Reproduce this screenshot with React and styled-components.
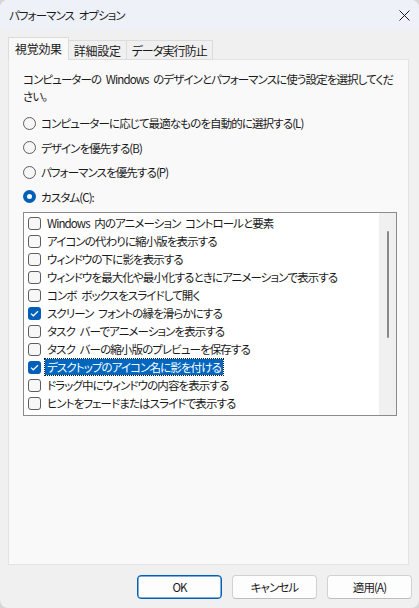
import styled, { createGlobalStyle, css } from "styled-components";

const GlobalStyle = createGlobalStyle`
  html, body {
    margin: 0;
    padding: 0;
    background: #d6d6d6;
  }
  body {
    font-family: "Noto Sans CJK JP", "Noto Sans", sans-serif;
    font-size: 12px;
    color: #1a1a1a;
  }
`;

// Yu Gothic UI kana are narrow; squeeze Noto a bit to get the same widths
const uiText = css`
  font-size: 11.5px;
  letter-spacing: -0.9px;
  word-spacing: 3px;
  font-feature-settings: "palt";
`;

const Window = styled.div`
  width: 419px;
  height: 608px;
  background-color: #f0f0f0;
  border-radius: 8px;
  overflow: hidden;
  display: flex;
  flex-direction: column;
  box-sizing: border-box;
`;

const TitleBar = styled.div`
  height: 30px;
  flex: none;
  background-color: #eef2f8;
  display: flex;
  align-items: center;
  justify-content: space-between;
  padding-left: 9px;
`;

const Title = styled.div`
  ${uiText}
  color: #1b1b1b;
`;

const CloseButton = styled.div`
  width: 30px;
  height: 30px;
  display: flex;
  align-items: center;
  justify-content: center;
`;

const Body = styled.div`
  flex: 1;
  display: flex;
  flex-direction: column;
  padding: 8px 10px 0 8px;
`;

const TabRow = styled.div`
  display: flex;
  align-items: flex-end;
  height: 22px;
  position: relative;
  z-index: 1;
  margin-bottom: -1px;
`;

const Tab = styled.div`
  box-sizing: border-box;
  height: ${(p) => (p.$active ? "23px" : "20px")};
  padding: 0 ${(p) => (p.$active ? "6px" : "5px")};
  margin-left: ${(p) => (p.$first ? "0" : "-1px")};
  background-color: ${(p) => (p.$active ? "#f9f9f9" : "#f0f0f0")};
  border: 1px solid #dcdcdc;
  border-bottom: ${(p) => (p.$active ? "none" : "1px solid #dcdcdc")};
  display: flex;
  align-items: center;
  padding-bottom: ${(p) => (p.$active ? "2px" : "0")};
  font-size: 12px;
  letter-spacing: ${(p) => (p.$tight ? "-0.9px" : "-0.3px")};
  font-feature-settings: "palt";
  white-space: nowrap;
`;

const Panel = styled.div`
  box-sizing: border-box;
  height: 506px;
  background-color: #f9f9f9;
  border: 1px solid #e3e3e3;
  padding: 11px 12px 0 14px;
  display: flex;
  flex-direction: column;
`;

const Description = styled.p`
  ${uiText}
  margin: 0;
  max-width: 372px;
  line-height: 17px;
`;

const RadioGroup = styled.div`
  display: flex;
  flex-direction: column;
  margin-top: 6px;
`;

const RadioRow = styled.label`
  ${uiText}
  height: 24.5px;
  display: flex;
  align-items: center;
  gap: 5px;
`;

const RadioCircle = styled.span`
  box-sizing: border-box;
  width: 13px;
  height: 13px;
  border-radius: 50%;
  border: ${(p) => (p.$checked ? "none" : "1px solid #5e5e5e")};
  background-color: ${(p) => (p.$checked ? "#005fb8" : "#f6f6f6")};
  display: flex;
  align-items: center;
  justify-content: center;
  flex: none;
  &::after {
    content: "";
    display: ${(p) => (p.$checked ? "block" : "none")};
    width: 5px;
    height: 5px;
    border-radius: 50%;
    background: #ffffff;
  }
`;

const ListBox = styled.div`
  box-sizing: border-box;
  margin-top: 3px;
  width: 374px;
  height: 204px;
  border: 1px solid #8b8b8b;
  background-color: #ffffff;
  display: flex;
`;

const ListItems = styled.div`
  flex: 1;
  padding: 1px 0 0 4px;
  display: flex;
  flex-direction: column;
`;

const Item = styled.div`
  height: 18px;
  display: flex;
  align-items: center;
  gap: 4px;
`;

const CheckBox = styled.span`
  box-sizing: border-box;
  width: 13px;
  height: 13px;
  border-radius: 3px;
  flex: none;
  border: ${(p) => (p.$checked ? "none" : "1px solid #5e5e5e")};
  background-color: ${(p) => (p.$checked ? "#005fb8" : "#f7f7f7")};
  display: flex;
  align-items: center;
  justify-content: center;
`;

const ItemLabel = styled.span`
  ${uiText}
  padding: 0 2px;
  line-height: 16px;
  white-space: nowrap;
  color: ${(p) => (p.$selected ? "#ffffff" : "#1a1a1a")};
  background-color: ${(p) => (p.$selected ? "#0067c0" : "transparent")};
  outline: ${(p) => (p.$selected ? "1px dotted #1a1a1a" : "none")};
`;

const ScrollTrack = styled.div`
  width: 17px;
  flex: none;
  background-color: #f0f0f0;
  display: flex;
  justify-content: center;
  padding-top: 18px;
  box-sizing: border-box;
`;

const ScrollThumb = styled.div`
  width: 2px;
  height: 107px;
  border-radius: 1px;
  background-color: #8a8a8a;
`;

const ButtonRow = styled.div`
  display: flex;
  justify-content: flex-end;
  gap: 10px;
  padding-top: 10px;
  margin-right: -3px;
`;

const Button = styled.button`
  ${uiText}
  box-sizing: border-box;
  width: 85px;
  height: 24px;
  border-radius: 4px;
  background-color: #fdfdfd;
  border: 1px solid ${(p) => (p.$primary ? "#005fb8" : "#d1d1d1")};
  border-bottom-color: ${(p) => (p.$primary ? "#005fb8" : "#bdbdbd")};
  box-shadow: ${(p) => (p.$primary ? "inset 0 0 0 0.5px #005fb8" : "none")};
  font-family: inherit;
  color: #1a1a1a;
  padding: 0;
`;

const Check = () => (
  <svg width="9" height="7" viewBox="0 0 9 7">
    <path d="M1 3.6 L3.3 5.8 L8 1.2" fill="none" stroke="#ffffff" strokeWidth="1.2" />
  </svg>
);

const items = [
  { label: "Windows 内のアニメーション コントロールと要素" },
  { label: "アイコンの代わりに縮小版を表示する" },
  { label: "ウィンドウの下に影を表示する" },
  { label: "ウィンドウを最大化や最小化するときにアニメーションで表示する" },
  { label: "コンボ ボックスをスライドして開く" },
  { label: "スクリーン フォントの縁を滑らかにする", checked: true },
  { label: "タスク バーでアニメーションを表示する" },
  { label: "タスク バーの縮小版のプレビューを保存する" },
  { label: "デスクトップのアイコン名に影を付ける", checked: true, selected: true },
  { label: "ドラッグ中にウィンドウの内容を表示する" },
  { label: "ヒントをフェードまたはスライドで表示する" },
];

const radios = [
  { label: "コンピューターに応じて最適なものを自動的に選択する(L)" },
  { label: "デザインを優先する(B)" },
  { label: "パフォーマンスを優先する(P)" },
  { label: "カスタム(C):", checked: true },
];

const App = () => {
  return (
    <Window>
      <GlobalStyle />
      <TitleBar>
        <Title>パフォーマンス オプション</Title>
        <CloseButton>
          <svg width="11" height="11" viewBox="0 0 11 11">
            <path d="M0.5 0.5 L10.5 10.5 M10.5 0.5 L0.5 10.5" stroke="#1a1a1a" strokeWidth="1" />
          </svg>
        </CloseButton>
      </TitleBar>
      <Body>
        <TabRow>
          <Tab $active $first>視覚効果</Tab>
          <Tab>詳細設定</Tab>
          <Tab $tight>データ実行防止</Tab>
        </TabRow>
        <Panel>
          <Description>
            コンピューターの Windows のデザインとパフォーマンスに使う設定を選択してください。
          </Description>
          <RadioGroup>
            {radios.map((r) => (
              <RadioRow key={r.label}>
                <RadioCircle $checked={r.checked} />
                {r.label}
              </RadioRow>
            ))}
          </RadioGroup>
          <ListBox>
            <ListItems>
              {items.map((it) => (
                <Item key={it.label}>
                  <CheckBox $checked={it.checked}>{it.checked && <Check />}</CheckBox>
                  <ItemLabel $selected={it.selected}>{it.label}</ItemLabel>
                </Item>
              ))}
            </ListItems>
            <ScrollTrack>
              <ScrollThumb />
            </ScrollTrack>
          </ListBox>
        </Panel>
        <ButtonRow>
          <Button $primary>OK</Button>
          <Button>キャンセル</Button>
          <Button>適用(A)</Button>
        </ButtonRow>
      </Body>
    </Window>
  );
};

export default App;
